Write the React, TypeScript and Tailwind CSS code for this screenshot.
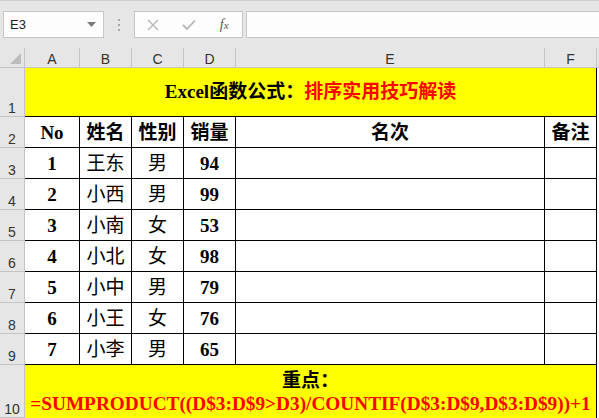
import React from "react";

const serif = "font-['Liberation_Serif','Noto_Sans_CJK_SC',serif]";
const ui = "font-['Liberation_Sans','Noto_Sans_CJK_SC',sans-serif]";

const cols = [
    { key: "A", w: "w-[55px]" },
    { key: "B", w: "w-[52px]" },
    { key: "C", w: "w-[52px]" },
    { key: "D", w: "w-[52px]" },
    { key: "E", w: "w-[309px]" },
    { key: "F", w: "w-[52px]" },
];

const rows = [
    { no: 1, name: "王东", sex: "男", sales: 94 },
    { no: 2, name: "小西", sex: "男", sales: 99 },
    { no: 3, name: "小南", sex: "女", sales: 53 },
    { no: 4, name: "小北", sex: "女", sales: 98 },
    { no: 5, name: "小中", sex: "男", sales: 79 },
    { no: 6, name: "小王", sex: "女", sales: 76 },
    { no: 7, name: "小李", sex: "男", sales: 65 },
];

function RowHead({ n, h }: { n: number; h: string }) {
    return (
        <div className={`w-[25px] ${h} shrink-0 bg-[#e6e6e6] border-r border-b border-[#c4c4c4] flex items-end justify-center pb-[1px] text-[14px] font-normal leading-none text-[#333] ${ui}`}>
            {n}
        </div>
    );
}

function Toolbar() {
    return (
        <div className="h-[48px] bg-[#e6e6e6] border-t border-[#cfcfcf] flex items-start pt-[10px] pl-[3px]">
            {/* name box */}
            <div className={`w-[101px] h-[27px] bg-[#fdfdfd] border border-[#c6c6c6] flex items-center justify-between pl-[6px] pr-[7px] text-[13px] text-[#222] ${ui}`}>
                <span>E3</span>
                <svg width="9" height="5" viewBox="0 0 9 5">
                    <path d="M0 0 L9 0 L4.5 5 Z" fill="#7a7a7a" />
                </svg>
            </div>
            <div className="w-[30px] h-[27px] flex flex-col items-center justify-center gap-[3px]">
                <span className="w-[2px] h-[2px] bg-[#a8a8a8]" />
                <span className="w-[2px] h-[2px] bg-[#a8a8a8]" />
                <span className="w-[2px] h-[2px] bg-[#a8a8a8]" />
            </div>
            {/* formula buttons */}
            <div className="w-[109px] h-[27px] bg-[#fdfdfd] border border-[#c6c6c6] flex items-center">
                <div className="w-[36px] flex justify-center">
                    <svg width="12" height="12" viewBox="0 0 12 12">
                        <path d="M1 1 L11 11 M11 1 L1 11" stroke="#b4b4b4" strokeWidth="1.4" />
                    </svg>
                </div>
                <div className="w-[36px] flex justify-center">
                    <svg width="14" height="12" viewBox="0 0 14 12">
                        <path d="M1 6 L5 10 L13 1.5" stroke="#b4b4b4" strokeWidth="1.8" fill="none" />
                    </svg>
                </div>
                <div className="w-[36px] flex justify-center">
                    <span className={`text-[14px] italic text-[#555] ${serif} leading-none`}>
                        f<span className="text-[11px]">x</span>
                    </span>
                </div>
            </div>
            <div className="ml-[3px] flex-1 h-[27px] bg-[#fdfdfd] border-y border-l border-[#c6c6c6]" />
        </div>
    );
}

function ColumnHeader() {
    return (
        <div className="h-[20px] flex bg-[#e6e6e6]">
            <div className="w-[25px] shrink-0 border-r border-b border-[#c4c4c4] relative">
                <svg className="absolute right-[3px] bottom-[3px]" width="11" height="11" viewBox="0 0 11 11">
                    <path d="M11 0 L11 11 L0 11 Z" fill="#bdbdbd" />
                </svg>
            </div>
            {cols.map((c) => (
                <div
                    key={c.key}
                    className={`${c.w} shrink-0 border-r border-b border-[#c4c4c4] flex items-end justify-center pb-[1px] text-[14px] leading-none text-[#333] ${ui}`}
                >
                    {c.key}
                </div>
            ))}
            <div className="flex-1 border-b border-[#c4c4c4]" />
        </div>
    );
}

function Cell({ w, children }: { w: string; children?: React.ReactNode }) {
    return (
        <div className={`${w} shrink-0 h-full border-r border-b border-black flex items-center justify-center pt-[2px]`}>
            {children}
        </div>
    );
}

export default function App() {
    return (
        <div className={`w-[599px] h-[418px] overflow-hidden bg-white ${serif}`}>
            <Toolbar />
            <ColumnHeader />

            {/* Row 1 - title */}
            <div className="flex h-[49px]">
                <RowHead n={1} h="h-[49px]" />
                <div className="w-[572px] shrink-0 bg-[#ffff00] border-r border-b border-black flex items-center justify-center text-[19px] font-bold">
                    <span className="text-black">Excel函数公式：</span>
                    <span className="text-[#ff0000]">排序实用技巧解读</span>
                </div>
            </div>

            {/* Row 2 - headers */}
            <div className="flex h-[31px] text-[19px] font-bold text-black">
                <RowHead n={2} h="h-[31px]" />
                <Cell w="w-[55px]">No</Cell>
                <Cell w="w-[52px]">姓名</Cell>
                <Cell w="w-[52px]">性别</Cell>
                <Cell w="w-[52px]">销量</Cell>
                <Cell w="w-[309px]">名次</Cell>
                <Cell w="w-[52px]">备注</Cell>
            </div>

            {rows.map((r, i) => (
                <div key={r.no} className="flex h-[31px] text-[19px] text-black">
                    <RowHead n={i + 3} h="h-[31px]" />
                    <Cell w="w-[55px]">
                        <span className="font-bold">{r.no}</span>
                    </Cell>
                    <Cell w="w-[52px]">{r.name}</Cell>
                    <Cell w="w-[52px]">{r.sex}</Cell>
                    <Cell w="w-[52px]">
                        <span className="font-bold">{r.sales}</span>
                    </Cell>
                    <Cell w="w-[309px]" />
                    <Cell w="w-[52px]" />
                </div>
            ))}

            {/* Row 10 - formula */}
            <div className="flex h-[60px]">
                <RowHead n={10} h="h-[53px]" />
                <div className="w-[572px] shrink-0 h-[60px] bg-[#ffff00] border-r border-black flex flex-col items-center pt-[4px] text-[19px] font-bold leading-[23px]">
                    <span className="text-black">重点：</span>
                    <span className="text-[#ff0000] whitespace-nowrap text-[19.3px]">=SUMPRODUCT((D$3:D$9&gt;D3)/COUNTIF(D$3:D$9,D$3:D$9))+1</span>
                </div>
            </div>
        </div>
    );
}
